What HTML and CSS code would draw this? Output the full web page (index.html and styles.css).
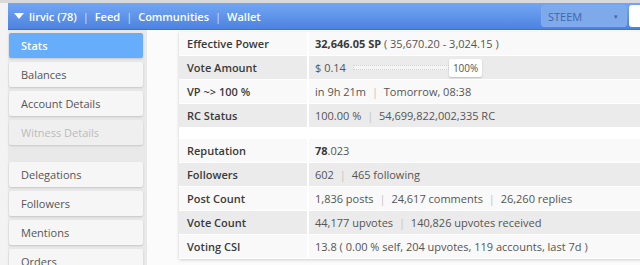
FILE: index.html
```html
<!DOCTYPE html>
<html lang="en">
<head>
    <meta charset="UTF-8">
    <meta name="viewport" content="width=device-width, initial-scale=1.0">
    <title>lirvic - Stats</title>
    <link rel="stylesheet" href="styles.css">
</head>
<body>
    <div class="top-strip"></div>
    <header class="topbar">
        <div class="nav">
            <svg class="caret" width="10" height="6" viewBox="0 0 10 6"><polygon points="0,0 10,0 5,6" fill="#fff"/></svg>
            <a href="#">lirvic (78)</a>
            <span class="sep">|</span>
            <a href="#">Feed</a>
            <span class="sep">|</span>
            <a href="#">Communities</a>
            <span class="sep">|</span>
            <a href="#">Wallet</a>
        </div>
        <div class="tools">
            <div class="select">STEEM<span class="arrow">&#9662;</span></div>
            <div class="search"></div>
        </div>
    </header>

    <div class="layout">
        <nav class="sidebar">
            <a class="side-item active" href="#">Stats</a>
            <a class="side-item" href="#">Balances</a>
            <a class="side-item" href="#">Account Details</a>
            <a class="side-item disabled" href="#">Witness Details</a>
            <div class="side-gap"></div>
            <a class="side-item" href="#">Delegations</a>
            <a class="side-item" href="#">Followers</a>
            <a class="side-item" href="#">Mentions</a>
            <a class="side-item" href="#">Orders</a>
        </nav>

        <main class="content">
            <table class="stats">
                <tr>
                    <th>Effective Power</th>
                    <td><b>32,646.05 SP</b> ( 35,670.20 - 3,024.15 )</td>
                </tr>
                <tr>
                    <th>Vote Amount</th>
                    <td>
                        <div class="vote">
                            <span>$ 0.14</span>
                            <div class="bar"></div>
                            <span class="pct">100%</span>
                        </div>
                    </td>
                </tr>
                <tr>
                    <th>VP ~&gt; 100 %</th>
                    <td>in 9h 21m <span class="sep">|</span> Tomorrow, 08:38</td>
                </tr>
                <tr>
                    <th>RC Status</th>
                    <td>100.00 % <span class="sep">|</span> 54,699,822,002,335 RC</td>
                </tr>
                <tr class="spacer"><th></th><td></td></tr>
                <tr>
                    <th>Reputation</th>
                    <td><b>78</b>.023</td>
                </tr>
                <tr>
                    <th>Followers</th>
                    <td>602 <span class="sep">|</span> 465 following</td>
                </tr>
                <tr>
                    <th>Post Count</th>
                    <td>1,836 posts <span class="sep">|</span> 24,617 comments <span class="sep">|</span> 26,260 replies</td>
                </tr>
                <tr>
                    <th>Vote Count</th>
                    <td>44,177 upvotes <span class="sep">|</span> 140,826 upvotes received</td>
                </tr>
                <tr>
                    <th>Voting CSI</th>
                    <td>13.8 ( 0.00 % self, 204 upvotes, 119 accounts, last 7d )</td>
                </tr>
            </table>
        </main>
    </div>
</body>
</html>
```

FILE: styles.css
```css
html, body {
    margin: 0;
    height: 100%;
    overflow: hidden;
}

body {
    font-family: "Open Sans", Arial, sans-serif;
    font-size: 11px;
    color: #555;
    background-color: #f3f3f3;
}

a {
    text-decoration: none;
}

.top-strip {
    height: 3px;
    background-color: #d9d9d9;
}

/* barra azul do topo */
.topbar {
    display: flex;
    justify-content: space-between;
    align-items: center;
    height: 26px;
    margin-left: 8px;
    padding-left: 6px;
    background: linear-gradient(#72a6f4, #4d83df);
    border-bottom: 1px solid #3f72cf;
}

.nav {
    display: flex;
    align-items: center;
    color: #fff;
    font-weight: 600;
}

.nav a {
    color: #fff;
}

.caret {
    margin-right: 5px;
}

.nav .sep {
    margin: 0 6px;
    color: rgba(255, 255, 255, 0.75);
    font-weight: 400;
}

.tools {
    display: flex;
    gap: 2px;
    align-self: stretch;
    padding: 2px 0 2px;
}

.select {
    display: flex;
    justify-content: space-between;
    align-items: center;
    width: 86px;
    padding: 0 8px 0 6px;
    box-sizing: border-box;
    border-radius: 3px;
    background-color: #7ea9ea;
    border: 1px solid #84aced;
    color: #3f67a8;
    font-size: 11px;
}

.select .arrow {
    font-size: 7px;
    color: #3f67a8;
}

.search {
    width: 11px;
    background-color: #fff;
    border-radius: 3px 0 0 3px;
}

.layout {
    display: flex;
    margin-left: 8px;
    height: 100%;
}

/* menu lateral */
.sidebar {
    width: 139px;
    flex-shrink: 0;
    padding: 3px 4px 0 1px;
    box-sizing: border-box;
    background-color: #e9e9e9;
    box-shadow: 1px 0 2px rgba(0, 0, 0, 0.08);
}

.side-item {
    display: flex;
    align-items: center;
    height: 25px;
    margin-bottom: 4px;
    padding-left: 12px;
    border-radius: 2px;
    background-color: #f6f6f6;
    box-shadow: 0 1px 2px rgba(0, 0, 0, 0.15);
    color: #555;
}

.side-item.active {
    background-color: #66adfb;
    color: #fff;
    font-weight: 600;
}

.side-item.disabled {
    color: #bbb;
    background-color: #efefef;
}

.side-gap {
    height: 13px;
}

.content {
    flex: 1;
    background-color: #fbfbfb;
    padding: 2px 0 0 32px;
}

/* tabela de estatisticas */
.stats {
    width: 520px;
    border-collapse: collapse;
    background-color: #fff;
    box-shadow: 0 1px 3px rgba(0, 0, 0, 0.18);
}

.stats th,
.stats td {
    height: 23px;
    padding: 0 0 0 8px;
    border-bottom: 1px solid #fff;
    text-align: left;
    white-space: nowrap;
    background-color: #f9f9f9;
}

.stats th {
    width: 120px;
    font-weight: 600;
    color: #3a3a3a;
    border-right: 2px solid #fff;
}

.stats td {
    padding-left: 6px;
}

.stats tr:nth-child(even) th,
.stats tr:nth-child(even) td {
    background-color: #ebebeb;
}

.stats tr:nth-child(n+6):nth-child(odd) th,
.stats tr:nth-child(n+6):nth-child(odd) td {
    background-color: #ebebeb;
}

.stats tr:nth-child(n+6):nth-child(even) th,
.stats tr:nth-child(n+6):nth-child(even) td {
    background-color: #f9f9f9;
}

.stats tr.spacer th,
.stats tr.spacer td {
    height: 10px;
    background-color: #fff;
}

.stats b {
    color: #3a3a3a;
}

.stats .sep {
    margin: 0 3px;
    color: #c4c4c4;
}

.vote {
    display: flex;
    align-items: center;
}

.bar {
    width: 94px;
    height: 3px;
    margin-left: 7px;
    border: 1px dotted #d2d2d2;
    background-color: #f5f5f5;
}

.pct {
    padding: 2px 4px;
    background-color: #fff;
    border-radius: 2px;
    box-shadow: 0 1px 2px rgba(0, 0, 0, 0.2);
    font-size: 10px;
}
```
